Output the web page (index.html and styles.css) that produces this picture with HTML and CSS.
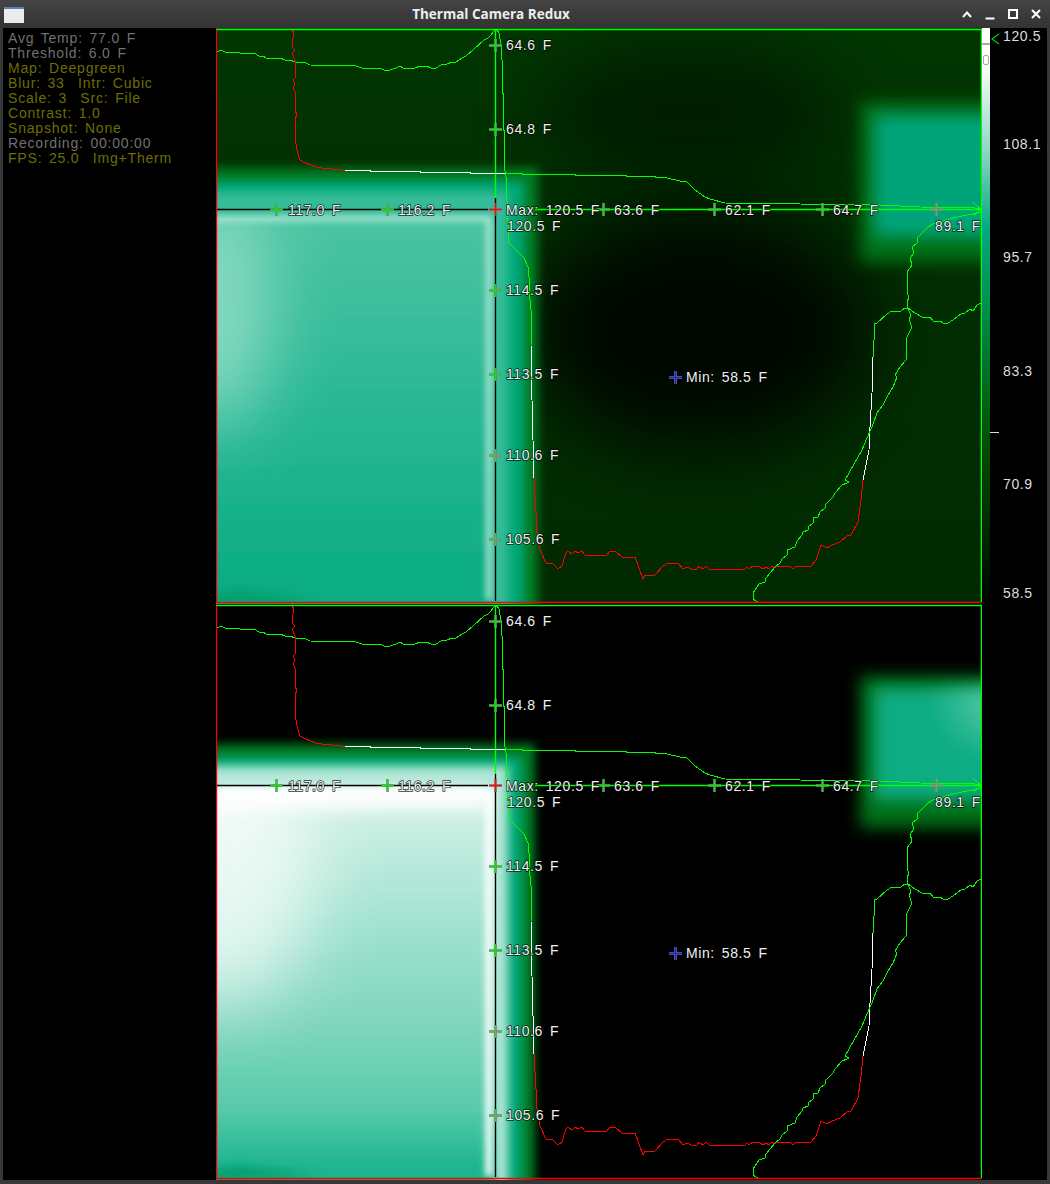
FILE: index.html
```html
<!DOCTYPE html>
<html lang="en">
<head>
<meta charset="utf-8">
<title>Thermal Camera Redux</title>
<link rel="stylesheet" href="styles.css">
</head>
<body>
<div class="window">
  <header class="titlebar">
    <svg class="app-icon" width="20" height="16" viewBox="0 0 20 16"><rect width="20" height="16" fill="#f2f4f6"/><rect width="20" height="2" fill="#5b7fb5"/><rect y="2" width="20" height="14" fill="#e4e8ec" opacity=".6"/></svg>
    <div class="title">Thermal Camera Redux</div>
    <div class="controls">
      <svg width="12" height="12" viewBox="0 0 12 12"><path class="ctl" d="M2 9 6 4.500 10 9"/></svg>
      <svg width="12" height="12" viewBox="0 0 12 12"><path class="ctl" d="M1.500 10.500H10.500"/></svg>
      <svg width="12" height="12" viewBox="0 0 12 12"><path class="ctl" d="M2 2H10V10H2Z"/></svg>
      <svg width="12" height="12" viewBox="0 0 12 12"><path class="ctl" d="M2 2 10 10M10 2 2 10"/></svg>
    </div>
  </header>
  <main class="client">
    <aside class="sidebar">
      <div class="gray">Avg Temp: 77.0 F</div>
      <div class="gray">Threshold: 6.0 F</div>
      <div class="olive">Map: Deepgreen</div>
      <div class="olive">Blur: 33  Intr: Cubic</div>
      <div class="olive">Scale: 3  Src: File</div>
      <div class="olive">Contrast: 1.0</div>
      <div class="olive">Snapshot: None</div>
      <div class="gray">Recording: 00:00:00</div>
      <div class="olive">FPS: 25.0  Img+Therm</div>
    </aside>
    <section class="panes">
      <svg class="pane" width="766" height="576" viewBox="216 28 766 576">
        <defs>
          <clipPath id="hotclip"><rect x="216" y="218" width="276" height="385"/></clipPath>
          <filter id="b3" filterUnits="userSpaceOnUse" x="0" y="0" width="1100" height="800"><feGaussianBlur stdDeviation="3"/></filter>
          <filter id="b5" filterUnits="userSpaceOnUse" x="0" y="0" width="1100" height="800"><feGaussianBlur stdDeviation="5"/></filter>
          <filter id="b8" filterUnits="userSpaceOnUse" x="0" y="0" width="1100" height="800"><feGaussianBlur stdDeviation="8"/></filter>
          <filter id="b35" filterUnits="userSpaceOnUse" x="0" y="-100" width="1200" height="900"><feGaussianBlur stdDeviation="35"/></filter>
          <linearGradient id="base1" x1="0" y1="0" x2="0" y2="1"><stop offset="0" stop-color="#023602"/><stop offset=".3" stop-color="#022e02"/><stop offset="1" stop-color="#022a02"/></linearGradient>
          <linearGradient id="hot1" x1="0" y1="0" x2="0" y2="1"><stop offset="0" stop-color="#4cc4a2"/><stop offset=".4" stop-color="#2ab896"/><stop offset=".75" stop-color="#10ae84"/><stop offset="1" stop-color="#0aa880"/></linearGradient>
          <linearGradient id="hot2" x1="0" y1="0" x2="0" y2="1"><stop offset="0" stop-color="#d8f2ea"/><stop offset=".3" stop-color="#a0e2cf"/><stop offset=".5" stop-color="#80d6bc"/><stop offset=".68" stop-color="#58cbab"/><stop offset=".8" stop-color="#20b690"/><stop offset="1" stop-color="#0cae84"/></linearGradient>
          <radialGradient id="glow2" cx=".9" cy=".1" r=".6"><stop offset="0" stop-color="#60cdae"/><stop offset="1" stop-color="#60cdae" stop-opacity="0"/></radialGradient>
          <g id="xg"><path class="xh" d="M-6.500 0H6.500M0-6.500V6.500"/><path class="xc g" d="M-6.500 0H6.500M0-6.500V6.500"/></g>
          <g id="xm"><path class="xh" d="M-6.500 0H6.500M0-6.500V6.500"/><path class="xc gm" d="M-6.500 0H6.500M0-6.500V6.500"/></g>
          <g id="xr"><path class="xh" d="M-6.500 0H6.500M0-6.500V6.500"/><path class="xc r" d="M-6.500 0H6.500M0-6.500V6.500"/></g>
          <g id="xb"><path class="xh" d="M-6.500 0H6.500M0-6.500V6.500"/><path class="xc b" d="M-6.500 0H6.500M0-6.500V6.500"/></g>
          <g id="curves">
            <path class="axis black" d="M217 209.500H488M495.500 198V601"/>
            <path class="axis green" d="M495.500 30V198M535 209.500H981"/>
            <path class="ln green" d="M973 202 981 209.500 973 216"/>
            <path class="ln green" d="M217 52 221 50 225 52 240 53 254 53 259 56 263 56 266 58 280 58 285 60 290 60 295 62 304 62 310 65 356 66 362 68 380 68 384 70 390 70 396 68 400 66 403 68 415 68 420 66 426 66 431 68 436 68 441 65 447 64 452 62 456 62 462 58 466 56 473 50 484 40 488 38 491 35 494 31 497 30 499 33 501 45 502 60 502 93 503 93 503 130 504 130 504 165 506 177 508 225 509 243 516 250 524 258 528 267 529 277 530 300 531 310 531 345"/>
            <path class="ln white" d="M531 345 532 400 533 440 534 478"/>
            <path class="ln red" d="M534 478 536 513 537 533 540 550 546 563 552 563 558 569 562 566 566 553 568 551 572 554 575 551 578 553 582 551 585 555 607 555 610 551 615 551 622 557 635 557 643 579 645 575 655 575 663 566 668 563 678 563 683 569 687 567 691 569 697 569 699 566 703 569 706 566 709 569 745 569 747 567 749 569 753 566 759 566 763 569 766 567 769 569 772 566 775 568 777 566 790 566 793 569 796 566 811 566 816 560 821 545 827 548 832 545 840 542 847 536 851 535 858 522 861 500 863 480"/>
            <path class="ln white" d="M863 480 865 470 869 450 870 427 872 393 873 357"/>
            <path class="ln green" d="M873 357 875 323 877 323 887 314 892 311 901 311 905 308 908 308 915 313 922 317 930 317 933 321 940 321 943 323 948 323 953 320 961 314 965 313 970 309 973 311 977 305 981 303"/>
            <path class="ln green" d="M759 603 753 599 753 593 759 584 765 582 766 578 775 567 780 563 782 559 787 555 787 550 795 547 797 541 802 535 803 532 808 530 808 527 813 523 813 518 818 517 820 512 825 508 825 505 833 497 835 493 842 485 847 483 849 482 845 480 862 450 867 438 872 427 877 413 883 405 887 397 893 387 897 377 895 375 900 367 906 360 907 337 912 327 909 320 911 315 908 309 907 302 909 297 907 293 907 272 912 265 910 258 914 253 912 247 917 243 918 237 928 227 933 224 953 218 981 212"/>
            <path class="ln red" d="M292 28 294 35 292 42 292 47 295 50 292 53 295 60 295 78 293 80 295 84 293 88 295 92 295 110 297 115 295 118 295 138 297 150 300 160 306 163 316 167 322 168 332 169 345 170.500"/>
            <path class="ln white" d="M345 170.500H370V171.500H420V172.500H470V173.500H505"/>
            <path class="ln green" d="M505 173.500H522V174.500H575V175.500H626V176.500H655V177.500H665L680 181 687 182 695 190 705 197 710 199 725 203 800 204 880 205 920 207 975 208 981 209"/>
            <use href="#xg" x="495.500" y="45.500"/>
            <use href="#xg" x="495.500" y="129.500"/>
            <use href="#xg" x="276.500" y="209.500"/>
            <use href="#xg" x="387.500" y="209.500"/>
            <use href="#xr" x="495.500" y="209.500"/>
            <use href="#xg" x="603.500" y="209.500"/>
            <use href="#xg" x="714.500" y="209.500"/>
            <use href="#xg" x="822.500" y="209.500"/>
            <use href="#xm" x="936.500" y="209.500"/>
            <use href="#xg" x="495.500" y="290.500"/>
            <use href="#xg" x="495.500" y="374.500"/>
            <use href="#xm" x="495.500" y="455.500"/>
            <use href="#xm" x="495.500" y="539.500"/>
            <use href="#xb" x="675.500" y="377.500"/>
          </g>
        </defs>
        <rect x="216" y="28" width="766" height="575" fill="url(#base1)"/>
        <ellipse cx="700" cy="330" rx="170" ry="120" fill="#000" opacity=".8" filter="url(#b35)"/>
        <ellipse cx="690" cy="110" rx="150" ry="70" fill="#000" opacity=".4" filter="url(#b35)"/>
        <rect x="150" y="168" width="388" height="520" fill="#007a20" filter="url(#b5)"/>
        <rect x="150" y="181" width="374" height="500" fill="#00a878" filter="url(#b5)"/>
        <rect x="150" y="192" width="358" height="500" fill="#35bb98" filter="url(#b5)"/>
        <rect x="150" y="218" width="342" height="460" fill="url(#hot1)" filter="url(#b3)"/>
        <g clip-path="url(#hotclip)"><ellipse cx="215" cy="310" rx="55" ry="120" fill="#9ce2cc" opacity=".8" filter="url(#b35)"/></g>
        <path d="M200 218.500H489V600" fill="none" stroke="#a8e5d2" stroke-width="6" filter="url(#b3)"/>
        <path d="M205 594 240 589 320 600 205 606Z" fill="#009a68" opacity=".7" filter="url(#b5)"/>
        <rect x="860" y="102" width="160" height="160" fill="#006f18" filter="url(#b8)"/>
        <rect x="874" y="115" width="140" height="122" fill="#00a478" filter="url(#b8)"/>
        <use href="#curves"/>
        <text class="lbl" x="506" y="50">64.6 F</text>
        <text class="lbl" x="506" y="134">64.8 F</text>
        <text class="lbl" x="288" y="215">117.0 F</text>
        <text class="lbl" x="398" y="215">116.2 F</text>
        <text class="lbl" x="506" y="215">Max: 120.5 F</text>
        <text class="lbl" x="507" y="231">120.5 F</text>
        <text class="lbl" x="614" y="215">63.6 F</text>
        <text class="lbl" x="725" y="215">62.1 F</text>
        <text class="lbl" x="833" y="215">64.7 F</text>
        <text class="lbl" x="935" y="231">89.1 F</text>
        <text class="lbl" x="506" y="295">114.5 F</text>
        <text class="lbl" x="506" y="379">113.5 F</text>
        <text class="lbl" x="506" y="460">110.6 F</text>
        <text class="lbl" x="506" y="544">105.6 F</text>
        <text class="lbl" x="686" y="382">Min: 58.5 F</text>
        <path class="frame red" d="M216.500 28V602.500H981.500"/>
        <path class="frame green" d="M216.500 29.500H981.500V602"/>
      </svg>
      <svg class="pane" width="766" height="576" viewBox="216 28 766 576">
        <rect x="216" y="28" width="766" height="575" fill="#000"/>
        <rect x="150" y="168" width="385" height="520" fill="#007a20" filter="url(#b5)"/>
        <rect x="150" y="181" width="372" height="500" fill="#00a878" filter="url(#b5)"/>
        <rect x="150" y="190" width="358" height="500" fill="#b0e6d6" filter="url(#b5)"/>
        <rect x="150" y="212" width="346" height="470" fill="url(#hot2)" filter="url(#b3)"/>
        <g clip-path="url(#hotclip)"><ellipse cx="225" cy="290" rx="90" ry="140" fill="#fff" opacity=".7" filter="url(#b35)"/></g>
        <rect x="216" y="213" width="272" height="20" fill="#fff" filter="url(#b8)"/>
        <path d="M200 217.500H489V600" fill="none" stroke="#fff" stroke-width="7" filter="url(#b3)"/>
        <path d="M205 594 240 589 320 600 205 606Z" fill="#009a68" opacity=".8" filter="url(#b5)"/>
        <rect x="860" y="100" width="160" height="152" fill="#006f18" filter="url(#b8)"/>
        <rect x="874" y="112" width="140" height="112" fill="#0eac82" filter="url(#b8)"/>
        <rect x="888" y="112" width="130" height="110" fill="url(#glow2)" filter="url(#b8)"/>
        <use href="#curves"/>
        <text class="lbl" x="506" y="50">64.6 F</text>
        <text class="lbl" x="506" y="134">64.8 F</text>
        <text class="lbl" x="288" y="215">117.0 F</text>
        <text class="lbl" x="398" y="215">116.2 F</text>
        <text class="lbl" x="506" y="215">Max: 120.5 F</text>
        <text class="lbl" x="507" y="231">120.5 F</text>
        <text class="lbl" x="614" y="215">63.6 F</text>
        <text class="lbl" x="725" y="215">62.1 F</text>
        <text class="lbl" x="833" y="215">64.7 F</text>
        <text class="lbl" x="935" y="231">89.1 F</text>
        <text class="lbl" x="506" y="295">114.5 F</text>
        <text class="lbl" x="506" y="379">113.5 F</text>
        <text class="lbl" x="506" y="460">110.6 F</text>
        <text class="lbl" x="506" y="544">105.6 F</text>
        <text class="lbl" x="686" y="382">Min: 58.5 F</text>
        <path class="frame red" d="M216.500 28V602.500H981.500"/>
        <path class="frame green" d="M216.500 29.500H981.500V602"/>
      </svg>
    </section>
    <aside class="scale">
      <div class="bar">
        <span class="bar-tick"></span>
        <span class="bar-mark"></span>
        <svg class="arrow" width="9" height="12" viewBox="0 0 9 12"><path d="M8 1 1 6 8 11" fill="none" stroke="#00d000" stroke-width="1.200"/></svg>
        <span class="tick"></span>
      </div>
      <div class="nums">
        <span>120.5</span><span>108.1</span><span>95.7</span><span>83.3</span><span>70.9</span><span>58.5</span>
      </div>
    </aside>
  </main>
</div>
</body>
</html>
```
FILE: styles.css
```css
html, body { margin: 0; padding: 0; background: #333; }
.window { width: 1050px; height: 1184px; display: flex; flex-direction: column; background: #383838; overflow: hidden; }
.titlebar { height: 28px; flex: none; display: flex; align-items: center; position: relative; background: linear-gradient(#444, #333); }
.app-icon { margin-left: 4px; margin-top: 1px; }
.title { position: absolute; left: 0; right: 68px; text-align: center; color: #eee; font: 700 13.500px "Open Sans", "Noto Sans", sans-serif; }
.controls { margin-left: auto; display: flex; gap: 11px; padding-right: 8px; }
.ctl { fill: none; stroke: #fff; stroke-width: 2; }
.client { height: 1152px; flex: none; margin: 0 3px; display: flex; background: #000; }
.sidebar { width: 213px; flex: none; padding: 3px 0 0 5px; box-sizing: border-box; font: 400 14px/15px "Liberation Sans", sans-serif; letter-spacing: .8px; word-spacing: 2px; }
.gray { color: #707070; white-space: pre; }
.olive { color: #6e6e00; white-space: pre; }
.panes { width: 766px; flex: none; display: flex; flex-direction: column; }
.pane { display: block; }
.scale { flex: 1; display: flex; position: relative; }
.bar { width: 8px; height: 575px; position: relative; flex: none; background: linear-gradient(#fff 0, #fff 6%, #8fd8c5 21%, #00aa7e 35%, #009050 48%, #006010 66%, #024a02 74%, #012a01 87%, #000 100%); }
.bar-tick { position: absolute; left: 0; width: 8px; height: 2px; top: 15px; background: #aaa; }
.bar-mark { position: absolute; left: 1px; top: 27px; width: 4px; height: 8px; border: 1px solid #aaa; border-radius: 2px; }
.arrow { position: absolute; left: 9px; top: 5px; }
.tick { position: absolute; left: 8px; top: 404px; width: 9px; height: 1px; background: #ddd; }
.nums { margin-left: 13px; display: grid; grid-template-rows: 108px 113px 114px 113px 109px 20px; color: #ddd; font: 400 14px/17px "Liberation Sans", sans-serif; letter-spacing: .6px; }
.lbl { font: 400 14px "Liberation Sans", sans-serif; letter-spacing: .6px; word-spacing: 2.500px; fill: #f0f0f0; stroke: #000; stroke-width: 1.500px; stroke-opacity: .8; paint-order: stroke; }
.ln { fill: none; stroke-width: 1; shape-rendering: crispEdges; }
.axis { fill: none; stroke-width: 1.400; }
.frame { fill: none; stroke-width: 1.400; }
.green { stroke: #00ff00; }
.red { stroke: #f00; }
.white { stroke: #fff; }
.black { stroke: #000; }
.xh { fill: none; stroke: #808080; stroke-width: 2.500; }
.xc { fill: none; stroke-width: 1.400; }
.g { stroke: #10e010; }
.gm { stroke: #60b060; }
.r { stroke: #f01010; }
.b { stroke: #2020e0; }
```
